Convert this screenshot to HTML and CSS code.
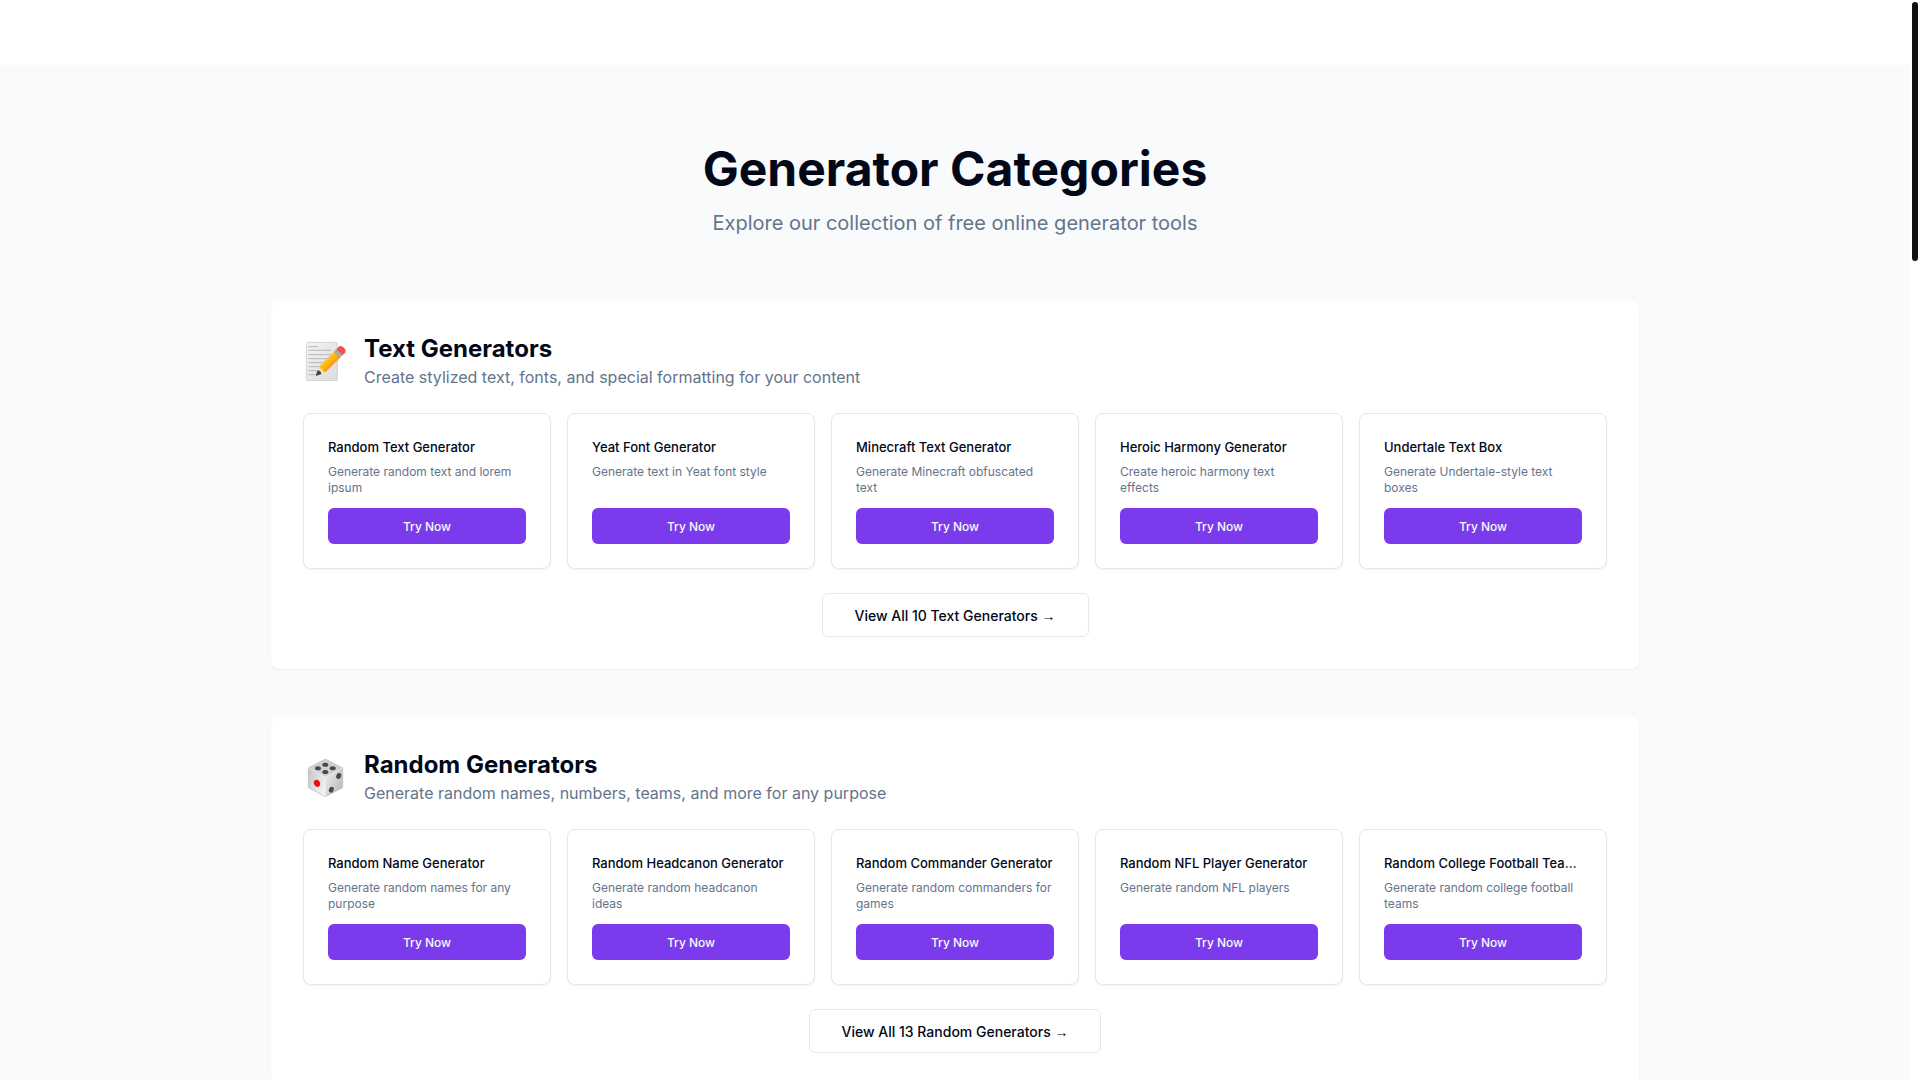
FILE: index.html
```html
<!DOCTYPE html>
<html lang="en">
<head>
<meta charset="utf-8">
<meta name="viewport" content="width=device-width, initial-scale=1">
<title>Generator Categories</title>
<link rel="stylesheet" href="styles.css">
</head>
<body>
<header class="site-header"></header>
<main class="page">
  <div class="container">
    <div class="hero">
      <h1 class="hero-title">Generator Categories</h1>
      <p class="hero-text">Explore our collection of free online generator tools</p>
    </div>

    <div class="categories">
      <section class="category">
        <div class="category-head">
          <svg class="category-icon" viewBox="0 0 135 120" aria-hidden="true">
            <defs>
              <linearGradient id="paper" x1="0" y1="0" x2="1" y2="1"><stop offset="0" stop-color="#f3f3f3"/><stop offset="1" stop-color="#dcdcdc"/></linearGradient>
              <linearGradient id="wood" x1="0" y1="0" x2="0" y2="1"><stop offset="0" stop-color="#ffca28"/><stop offset=".5" stop-color="#ffb300"/><stop offset="1" stop-color="#f19534"/></linearGradient>
            </defs>
            <rect x="10" y="4" width="93" height="115" rx="4" fill="url(#paper)" stroke="#c4c4c4" stroke-width="2"/>
            <path d="M16 17H44M16 28H84M16 41H84M16 53H84M16 65H72M16 77H60M16 89H42M16 101H36" stroke="#b4b6b8" stroke-width="3"/>
            <g transform="translate(40 103) rotate(-45)">
              <path d="M0 0L27 -13L30 -4L27 4L29 13Z" fill="#ffe0a3"/>
              <path d="M27 -13H89V13H27L23 6L27 1L23 -4Z" fill="url(#wood)"/>
              <path d="M0 0L13 -6Q17 0 13 6Z" fill="#424242" stroke="#424242" stroke-width="3" stroke-linejoin="round"/>
              <rect x="87" y="-13" width="11" height="26" fill="#9aa3a8"/>
              <path d="M91 -13V13" stroke="#c6cdd1" stroke-width="2"/>
              <path d="M98 -13H110Q117 -11 117 0Q117 11 110 13H98Z" fill="#ef5350"/>
            </g>
          </svg>
          <div>
            <h2 class="category-title">Text Generators</h2>
            <p class="category-text">Create stylized text, fonts, and special formatting for your content</p>
          </div>
        </div>
        <div class="cards">
          <article class="card"><h3 class="card-title">Random Text Generator</h3><p class="card-text">Generate random text and lorem ipsum</p><button class="try" type="button">Try Now</button></article>
          <article class="card"><h3 class="card-title">Yeat Font Generator</h3><p class="card-text">Generate text in Yeat font style</p><button class="try" type="button">Try Now</button></article>
          <article class="card"><h3 class="card-title">Minecraft Text Generator</h3><p class="card-text">Generate Minecraft obfuscated text</p><button class="try" type="button">Try Now</button></article>
          <article class="card"><h3 class="card-title">Heroic Harmony Generator</h3><p class="card-text">Create heroic harmony text<br>effects</p><button class="try" type="button">Try Now</button></article>
          <article class="card"><h3 class="card-title">Undertale Text Box</h3><p class="card-text">Generate Undertale-style text boxes</p><button class="try" type="button">Try Now</button></article>
        </div>
        <div class="more"><button class="view-all" type="button">View All 10 Text Generators <span class="arrow">→</span></button></div>
      </section>

      <section class="category">
        <div class="category-head">
          <svg class="category-icon" viewBox="0 0 135 120" aria-hidden="true">
            <defs>
              <linearGradient id="die-left" x1="0" y1="0" x2="1" y2=".6"><stop offset="0" stop-color="#c2c2c2"/><stop offset="1" stop-color="#f2f2f2"/></linearGradient>
              <linearGradient id="die-right" x1="0" y1="0" x2="1" y2=".6"><stop offset="0" stop-color="#eeeeee"/><stop offset="1" stop-color="#bdbdbd"/></linearGradient>
            </defs>
            <path d="M67 6L119 33L67 61L16 33Z" fill="#d0d0d0"/>
            <path d="M16 33L67 61V119L16 92Z" fill="url(#die-left)"/>
            <path d="M119 33L67 61V119L119 92Z" fill="url(#die-right)"/>
            <path d="M67 6L119 33V92L67 119L16 92V33Z" fill="none" stroke="#b8b8b8" stroke-width="2" stroke-linejoin="round"/>
            <path d="M16 33L67 61L119 33M67 61V118" fill="none" stroke="#f0f0f0" stroke-width="2"/>
            <g fill="#484848">
              <ellipse cx="67" cy="23" rx="9" ry="6"/><ellipse cx="45" cy="34" rx="9" ry="6"/><ellipse cx="89" cy="34" rx="9" ry="6"/><ellipse cx="67" cy="45" rx="9" ry="6"/>
              <ellipse cx="107" cy="57" rx="7" ry="9" transform="rotate(25 107 57)"/><ellipse cx="85" cy="98" rx="7" ry="9" transform="rotate(25 85 98)"/>
            </g>
            <ellipse cx="42" cy="79" rx="9" ry="11" fill="#ee0d0d" transform="rotate(-25 42 79)"/>
          </svg>
          <div>
            <h2 class="category-title">Random Generators</h2>
            <p class="category-text">Generate random names, numbers, teams, and more for any purpose</p>
          </div>
        </div>
        <div class="cards">
          <article class="card"><h3 class="card-title">Random Name Generator</h3><p class="card-text">Generate random names for any purpose</p><button class="try" type="button">Try Now</button></article>
          <article class="card"><h3 class="card-title">Random Headcanon Generator</h3><p class="card-text">Generate random headcanon ideas</p><button class="try" type="button">Try Now</button></article>
          <article class="card"><h3 class="card-title">Random Commander Generator</h3><p class="card-text">Generate random commanders for games</p><button class="try" type="button">Try Now</button></article>
          <article class="card"><h3 class="card-title">Random NFL Player Generator</h3><p class="card-text">Generate random NFL players</p><button class="try" type="button">Try Now</button></article>
          <article class="card"><h3 class="card-title">Random College Football Team Generator</h3><p class="card-text">Generate random college football teams</p><button class="try" type="button">Try Now</button></article>
        </div>
        <div class="more"><button class="view-all" type="button">View All 13 Random Generators <span class="arrow">→</span></button></div>
      </section>
    </div>
  </div>
</main>
<div class="scroll-track" aria-hidden="true"><div class="scroll-thumb"></div></div>
</body>
</html>
```
FILE: styles.css
```css
* {
  box-sizing: border-box;
  margin: 0;
}

html {
  scrollbar-width: none;
}

body {
  padding-right: 10px;
  background: #ffffff;
  color: #020817;
  font-family: Inter, "Liberation Sans", sans-serif;
  font-size: 16px;
  line-height: 24px;
}

button {
  font-family: inherit;
  cursor: pointer;
}

.site-header {
  height: 65px;
  background: #ffffff;
}

.page {
  background: #f8fafc;
  padding: 80px 0;
}

.container {
  max-width: 1400px;
  margin: 0 auto;
  padding: 0 16px;
}

.hero {
  margin-bottom: 64px;
  text-align: center;
}

.hero-title {
  margin-bottom: 16px;
  font-size: 48px;
  font-weight: 700;
  line-height: 48px;
}

.hero-text {
  color: #64748b;
  font-size: 20px;
  line-height: 28px;
}

.categories {
  display: grid;
  gap: 48px;
}

.category {
  padding: 32px;
  border-radius: 8px;
  background: #ffffff;
  box-shadow: 0 1px 2px rgba(0, 0, 0, 0.05);
}

.category-head {
  display: flex;
  align-items: center;
  gap: 16px;
  margin-bottom: 24px;
}

.category-icon {
  flex: none;
  width: 45px;
  height: 40px;
}

.category-title {
  font-size: 24px;
  font-weight: 700;
  line-height: 32px;
}

.category-text {
  color: #64748b;
}

.cards {
  display: grid;
  grid-template-columns: repeat(5, minmax(0, 1fr));
  gap: 16px;
}

.card {
  display: flex;
  flex-direction: column;
  padding: 24px;
  border: 1px solid #e2e8f0;
  border-radius: 8px;
  background: #ffffff;
  box-shadow: 0 1px 2px rgba(0, 0, 0, 0.05);
}

.card-title {
  margin-bottom: 8px;
  overflow: hidden;
  font-size: 13px;
  font-weight: 500;
  line-height: 18px;
  text-overflow: ellipsis;
  white-space: nowrap;
}

.card-text {
  margin-bottom: 12px;
  color: #64748b;
  font-size: 12px;
  line-height: 16px;
}

.try {
  height: 36px;
  margin-top: auto;
  border: 0;
  border-radius: 6px;
  background: #7c3aed;
  color: #f8fafc;
  font-size: 12px;
  font-weight: 500;
}

.more {
  display: flex;
  justify-content: center;
  margin-top: 24px;
}

.view-all {
  height: 44px;
  padding: 0 32px;
  border: 1px solid #e2e8f0;
  border-radius: 6px;
  background: #ffffff;
  color: #020817;
  font-size: 14px;
  font-weight: 500;
}

.arrow {
  font-family: "Liberation Sans", sans-serif;
}

.scroll-track {
  position: fixed;
  top: 0;
  right: 0;
  bottom: 0;
  width: 10px;
  padding: 2px;
  background: #ffffff;
}

.scroll-thumb {
  height: 24vh;
  border-radius: 3px;
  background: #111111;
}
```
